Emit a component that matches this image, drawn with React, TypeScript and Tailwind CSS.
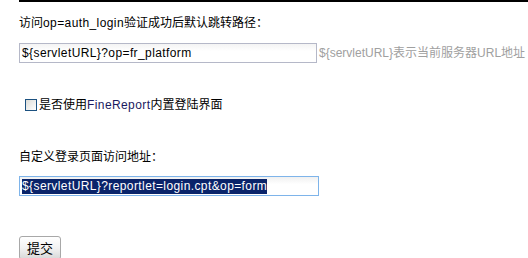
const L = ({ children }: { children: React.ReactNode }) => (
  <span className="tracking-[0.4px]">{children}</span>
);

export default function App() {
  const font = { fontFamily: '"Liberation Sans", "Noto Sans CJK SC", sans-serif' };
  return (
    <div className="w-[528px] h-[258px] overflow-hidden bg-white text-[12px] text-black" style={font}>
      {/* top rule */}
      <div className="ml-[19px] h-[2px] bg-black" />

      <div className="pl-[19px]">
        <div className="mt-[14px] leading-[14px]">
          访问<L>op=auth_login</L>验证成功后默认跳转路径：
        </div>

        <div className="mt-[13px] flex items-center">
          <div className="w-[298px] h-[20px] shrink-0 border border-[#b5b8c8] bg-gradient-to-b from-[#f4f4f4] to-white to-40% px-[2px] flex items-center leading-[14px]">
            <L>${"{servletURL}"}?op=fr_platform</L>
          </div>
          <span className="ml-[2px] whitespace-nowrap text-[#a0a0a0] leading-[14px]">
            ${"{servletURL}"}表示当前服务器URL地址
          </span>
        </div>

        <div className="mt-[35px] ml-[6px] flex items-center leading-[14px]">
          <span className="w-[12px] h-[12px] border border-[#1c5180] bg-gradient-to-br from-[#dcdcd7] to-white" />
          <span className="ml-[2px]">
            是否使用<span className="text-[#1a1a60]"><L>FineReport</L></span>内置登陆界面
          </span>
        </div>

        <div className="mt-[38px] leading-[14px]">自定义登录页面访问地址：</div>

        <div className="mt-[12px] w-[300px] h-[20px] border border-[#7eb4ea] bg-gradient-to-b from-[#f0f0f0] to-white to-40% px-[2px] flex items-center leading-[15px]">
          <span className="bg-[#0a246a] text-white">
            <L>${"{servletURL}"}?reportlet=login.cpt&amp;op=form</L>
          </span>
        </div>

        <button className="mt-[40px] w-[42px] h-[24px] border border-[#a8a8a8] rounded-[3px] bg-gradient-to-b from-white via-[#f2f2f2] to-[#d8d8d8] text-[13px] leading-[14px] pt-[2px]">
          提交
        </button>
      </div>
    </div>
  );
}
